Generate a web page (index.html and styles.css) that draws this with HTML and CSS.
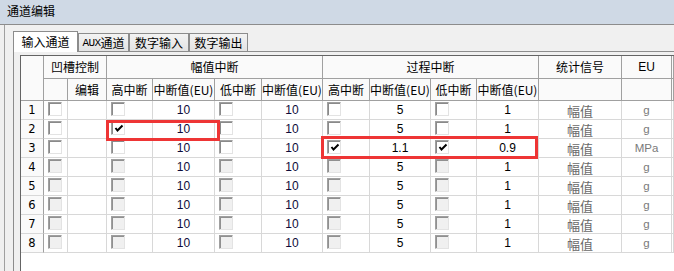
FILE: index.html
```html
<!DOCTYPE html>
<html>
<head>
<meta charset="utf-8">
<link rel="stylesheet" href="styles.css">
</head>
<body>
<div class="titlebar">通道编辑</div>
<div class="window">
  <div class="client">
    <div class="tabs">
      <div class="tab sel">输入通道</div>
      <div class="tab t2"><span class="lat">AUX</span>通道</div>
      <div class="tab t3">数字输入</div>
      <div class="tab t4">数字输出</div>
    </div>
    <div class="panel">
      <div class="grid">
        <div class="h rn span2r"></div>
        <div class="h c2">凹槽控制</div>
        <div class="h c4">幅值中断</div>
        <div class="h c4">过程中断</div>
        <div class="h">统计信号</div>
        <div class="h eu">EU</div>
        <div class="h"></div>

        <div class="h"></div>
        <div class="h">编辑</div>
        <div class="h">高中断</div>
        <div class="h">中断值(EU)</div>
        <div class="h">低中断</div>
        <div class="h">中断值(EU)</div>
        <div class="h">高中断</div>
        <div class="h">中断值(EU)</div>
        <div class="h">低中断</div>
        <div class="h">中断值(EU)</div>
        <div class="h"></div>
        <div class="h"></div>
        <div class="h"></div>

        <!-- row 1 -->
        <div class="rn">1</div>
        <div class="cbc"><span class="cb"></span></div>
        <div class="d"></div>
        <div class="cbc"><span class="cb"></span></div>
        <div class="d v10">10</div>
        <div class="cbc"><span class="cb"></span></div>
        <div class="d v10">10</div>
        <div class="cbc"><span class="cb"></span></div>
        <div class="d num">5</div>
        <div class="cbc"><span class="cb"></span></div>
        <div class="d num">1</div>
        <div class="d stat">幅值</div>
        <div class="d unit">g</div>
        <div class="d"></div>

        <!-- row 2 -->
        <div class="rn">2</div>
        <div class="cbc"><span class="cb"></span></div>
        <div class="d"></div>
        <div class="cbc"><span class="cb"><svg class="chk" viewBox="0 0 12 12"><polyline points="2.5,5 4.5,7.5 9.5,2.5"/></svg></span></div>
        <div class="d v10">10</div>
        <div class="cbc"><span class="cb"></span></div>
        <div class="d v10">10</div>
        <div class="cbc"><span class="cb"></span></div>
        <div class="d num">5</div>
        <div class="cbc"><span class="cb"></span></div>
        <div class="d num">1</div>
        <div class="d stat">幅值</div>
        <div class="d unit">g</div>
        <div class="d"></div>

        <!-- row 3 -->
        <div class="rn">3</div>
        <div class="cbc"><span class="cb"></span></div>
        <div class="d"></div>
        <div class="cbc"><span class="cb"></span></div>
        <div class="d v10">10</div>
        <div class="cbc"><span class="cb"></span></div>
        <div class="d v10">10</div>
        <div class="cbc"><span class="cb"><svg class="chk" viewBox="0 0 12 12"><polyline points="2.5,5 4.5,7.5 9.5,2.5"/></svg></span></div>
        <div class="d num">1.1</div>
        <div class="cbc"><span class="cb"><svg class="chk" viewBox="0 0 12 12"><polyline points="2.5,5 4.5,7.5 9.5,2.5"/></svg></span></div>
        <div class="d num">0.9</div>
        <div class="d stat">幅值</div>
        <div class="d unit">MPa</div>
        <div class="d"></div>

        <!-- row 4 -->
        <div class="rn">4</div>
        <div class="cbc"><span class="cb off"></span></div>
        <div class="d"></div>
        <div class="cbc"><span class="cb off"></span></div>
        <div class="d v10">10</div>
        <div class="cbc"><span class="cb off"></span></div>
        <div class="d v10">10</div>
        <div class="cbc"><span class="cb off"></span></div>
        <div class="d num">5</div>
        <div class="cbc"><span class="cb off"></span></div>
        <div class="d num">1</div>
        <div class="d stat">幅值</div>
        <div class="d unit">g</div>
        <div class="d"></div>

        <!-- row 5 -->
        <div class="rn">5</div>
        <div class="cbc"><span class="cb off"></span></div>
        <div class="d"></div>
        <div class="cbc"><span class="cb off"></span></div>
        <div class="d v10">10</div>
        <div class="cbc"><span class="cb off"></span></div>
        <div class="d v10">10</div>
        <div class="cbc"><span class="cb off"></span></div>
        <div class="d num">5</div>
        <div class="cbc"><span class="cb off"></span></div>
        <div class="d num">1</div>
        <div class="d stat">幅值</div>
        <div class="d unit">g</div>
        <div class="d"></div>

        <!-- row 6 -->
        <div class="rn">6</div>
        <div class="cbc"><span class="cb off"></span></div>
        <div class="d"></div>
        <div class="cbc"><span class="cb off"></span></div>
        <div class="d v10">10</div>
        <div class="cbc"><span class="cb off"></span></div>
        <div class="d v10">10</div>
        <div class="cbc"><span class="cb off"></span></div>
        <div class="d num">5</div>
        <div class="cbc"><span class="cb off"></span></div>
        <div class="d num">1</div>
        <div class="d stat">幅值</div>
        <div class="d unit">g</div>
        <div class="d"></div>

        <!-- row 7 -->
        <div class="rn">7</div>
        <div class="cbc"><span class="cb off"></span></div>
        <div class="d"></div>
        <div class="cbc"><span class="cb off"></span></div>
        <div class="d v10">10</div>
        <div class="cbc"><span class="cb off"></span></div>
        <div class="d v10">10</div>
        <div class="cbc"><span class="cb off"></span></div>
        <div class="d num">5</div>
        <div class="cbc"><span class="cb off"></span></div>
        <div class="d num">1</div>
        <div class="d stat">幅值</div>
        <div class="d unit">g</div>
        <div class="d"></div>

        <!-- row 8 -->
        <div class="rn">8</div>
        <div class="cbc"><span class="cb off"></span></div>
        <div class="d"></div>
        <div class="cbc"><span class="cb off"></span></div>
        <div class="d v10">10</div>
        <div class="cbc"><span class="cb off"></span></div>
        <div class="d v10">10</div>
        <div class="cbc"><span class="cb off"></span></div>
        <div class="d num">5</div>
        <div class="cbc"><span class="cb off"></span></div>
        <div class="d num">1</div>
        <div class="d stat">幅值</div>
        <div class="d unit">g</div>
        <div class="d"></div>
      </div>
    </div>
  </div>
</div>
<div class="mark mark1"></div>
<div class="mark mark2"></div>
</body>
</html>
```

FILE: styles.css
```css
html, body {
  margin: 0;
  padding: 0;
}
body {
  width: 674px;
  height: 271px;
  overflow: hidden;
  position: relative;
  background: #f0f0f0;
  font-family: "Noto Sans CJK SC", sans-serif;
  font-size: 12px;
  color: #000;
}
.titlebar {
  height: 24px;
  line-height: 21px;
  padding-left: 7px;
  background: #cfd9e5;
  border-bottom: 1px solid #8c8c8c;
}
.window {
  padding-left: 4px;
  height: 246px;
  overflow: hidden;
}
.client {
  height: 100%;
  border-left: 1px solid #a0a0a0;
  padding: 6px 0 0 8px;
  box-sizing: border-box;
}
.tabs {
  display: flex;
  align-items: flex-end;
  height: 20px;
}
.tab {
  box-sizing: border-box;
  height: 18px;
  border: 1px solid #8c8c8c;
  border-bottom: none;
  background: linear-gradient(#f3f3f3, #e3e3e3);
  display: flex;
  align-items: center;
  justify-content: center;
  line-height: 1;
  padding-top: 1px;
}
.tab.sel {
  width: 65px;
  height: 21px;
  margin-bottom: -1px;
  background: #fff;
  position: relative;
  z-index: 1;
  padding-top: 0;
}
.t2 { width: 51px; }
.t3 { width: 60px; }
.t4 { width: 59px; }
.lat {
  font-family: "Liberation Mono", monospace;
  font-size: 11px;
  letter-spacing: -0.6px;
}
.panel {
  border-top: 1px solid #8c8c8c;
  border-left: 1px solid #8c8c8c;
  padding: 3px 0 0 6px;
  height: 216px;
}
.grid {
  display: grid;
  grid-template-columns: 23px 24px 39px 46px 62px 47px 61px 47px 61px 46px 62px 83px 50px minmax(0, 1fr);
  grid-template-rows: 23px 22px repeat(8, 19px);
  box-sizing: border-box;
  height: 216px;
  align-content: start;
  background: #fff;
  border-left: 1px solid #646464;
  border-top: 1px solid #646464;
}
.grid > div {
  box-sizing: border-box;
  border-right: 1px solid #d8d8d8;
  border-bottom: 1px solid #d8d8d8;
  display: flex;
  align-items: center;
  justify-content: center;
  white-space: nowrap;
  overflow: hidden;
}
.grid > .h {
  background: #fafafa;
  border-color: #a0a0a0;
  line-height: 1;
}
.grid > .span2r { grid-row: span 2; }
.grid > .c2 { grid-column: span 2; }
.grid > .c4 { grid-column: span 4; }
.grid > .eu {
  font-family: "Liberation Sans", sans-serif;
  font-size: 12px;
}
.grid > .rn {
  background: #fafafa;
  border-right-color: #a0a0a0;
  font-family: "DejaVu Sans", sans-serif;
  font-size: 11.5px;
}
.grid > .cbc {
  justify-content: flex-start;
  align-items: flex-start;
  padding: 1px 0 0 4px;
}
.cb {
  display: block;
  box-sizing: border-box;
  width: 14px;
  height: 14px;
  background: #fff;
  border: 1px solid;
  border-color: #a0a0a0 #e3e3e3 #e3e3e3 #a0a0a0;
  box-shadow: inset 1px 1px 0 #8a8a8a;
  position: relative;
}
.cb.off {
  background: #f0f0f0;
  box-shadow: inset 1px 1px 0 #909090;
}
.chk {
  position: absolute;
  left: 1px;
  top: 1px;
  width: 12px;
  height: 12px;
}
.chk polyline {
  fill: none;
  stroke: #000;
  stroke-width: 2;
}
.d {
  font-family: "Liberation Sans", sans-serif;
  font-size: 12px;
}
.v10 { color: #0e0b3a; }
.num { color: #000; }
.stat {
  font-family: "Noto Sans CJK SC", sans-serif;
  font-size: 13px;
  color: #6a6a6a;
}
.grid > .unit {
  color: #7a7a7a;
  font-size: 11.5px;
}
.mark {
  position: absolute;
  box-sizing: border-box;
  border: 3px solid #ee3535;
}
.mark1 {
  left: 106px;
  top: 120px;
  width: 114px;
  height: 21px;
}
.mark2 {
  left: 321px;
  top: 136px;
  width: 217px;
  height: 23px;
}
```
